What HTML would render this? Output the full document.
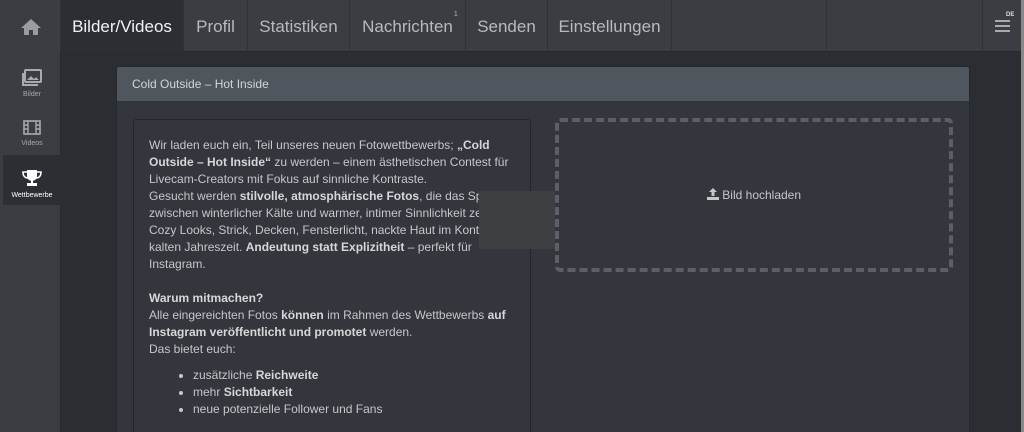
<!DOCTYPE html>
<html><head><meta charset="utf-8"><style>
*{margin:0;padding:0;box-sizing:border-box}
html,body{width:1024px;height:432px;overflow:hidden}
body{background:#2a2d32;font-family:"Liberation Sans",Arial,sans-serif;position:relative;color:#c9cacc}
.top{position:absolute;left:0;top:0;width:1024px;height:52px;background:#3a3d42;border-bottom:1px solid #25282c}
.top div.t{position:absolute;top:0;height:52px;line-height:54px;font-size:17px;color:#b8babd;text-align:center;border-right:1px solid #2e3135}
.side{position:absolute;left:0;top:52px;width:61px;height:380px;background:#3a3d42;border-right:1px solid #25282c}
.si{position:absolute;left:3px;width:58px;height:50px;text-align:center;font-size:7px;color:#a8aaad}
.si div{margin-top:3px}
.panel{position:absolute;left:116px;top:66px;width:854px;height:366px;background:#33363c;border:1px solid #25282c;border-bottom:none;border-radius:3px 3px 0 0;overflow:hidden}
.ph{height:34px;background:#50565e;color:#d4d6d8;font-size:12px;line-height:34px;padding-left:15px}
.txt{position:absolute;left:16px;top:52px;width:398px;height:330px;border:1px solid #232529;border-radius:3px;padding:17px 4px 17px 15px;font-size:12px;line-height:17px;color:#c6c7c9}
b{color:#d6d7d9}
ul{margin-top:9px;padding-left:44px}
.dash{position:absolute;left:438px;top:51px;width:398px;height:154px;border:4px dashed #5c6066;border-radius:5px;text-align:center;line-height:146px;font-size:12px;color:#c6c7c9}
</style></head><body>
<div class="top">
<div class="t" style="left:0;width:61px;background:#3a3d42"><svg width="20" height="17" viewBox="0 0 20 17" style="margin-top:18px;display:block;margin-left:21px"><path d="M10 1L0 10h3v7h5v-5h4v5h5v-7h3z" fill="#9a9ca0"/></svg></div>
<div class="t" style="left:61px;width:123px;background:#2b2e33;color:#f2f2f2">Bilder/Videos</div>
<div class="t" style="left:184px;width:64px">Profil</div>
<div class="t" style="left:248px;width:102px">Statistiken</div>
<div class="t" style="left:350px;width:116px">Nachrichten<span style="font-size:7px;position:absolute;top:-12px;margin-left:1px">1</span></div>
<div class="t" style="left:466px;width:82px">Senden</div>
<div class="t" style="left:548px;width:124px">Einstellungen</div>
<div class="t" style="left:672px;width:155px"></div>
<div class="t" style="left:827px;width:156px"></div>
<div style="position:absolute;left:995px;top:20px;width:15px;height:2px;background:#aaa;box-shadow:0 5px #aaa,0 10px #aaa"></div>
<div style="position:absolute;left:1006px;top:12px;font-size:6px;font-weight:bold;color:#ddd">DE</div>
<div style="position:absolute;left:1021px;top:0;width:3px;height:432px;background:#888"></div>
</div>
<div class="side">
<div class="si" style="top:5px"><svg width="20" height="17" style="margin-top:12px"><rect x="3" y="1" width="16" height="12" rx="1" fill="none" stroke="#a8aaad" stroke-width="2"/><path d="M1 4v12h15" fill="none" stroke="#a8aaad" stroke-width="2"/><path d="M5 11l4-4 3 3 2-2 3 3z" fill="#a8aaad"/></svg><div>Bilder</div></div>
<div class="si" style="top:55px"><svg width="18" height="15" style="margin-top:13px"><rect x="1" y="1" width="16" height="13" fill="none" stroke="#a8aaad" stroke-width="1.6"/><path d="M5 1v13M13 1v13M1 5h4M1 9h4M13 5h4M13 9h4" stroke="#a8aaad" stroke-width="1.4"/></svg><div>Videos</div></div>
<div class="si" style="top:103px;background:#2b2e33;color:#fff"><svg width="20" height="18" style="margin-top:14px"><path d="M5 1h10v6a5 5 0 0 1-10 0z" fill="#fff"/><path d="M5 3H1c0 4 2 6 5 6M15 3h4c0 4-2 6-5 6" fill="none" stroke="#fff" stroke-width="1.6"/><rect x="9" y="11" width="2" height="3" fill="#fff"/><rect x="5" y="14" width="10" height="3" fill="#fff"/></svg><div>Wettbewerbe</div></div>
</div>
<div class="panel">
<div class="ph">Cold Outside – Hot Inside</div>
<div class="txt">Wir laden euch ein, Teil unseres neuen Fotowettbewerbs; <b>„Cold Outside – Hot Inside“</b> zu werden – einem ästhetischen Contest für Livecam-Creators mit Fokus auf sinnliche Kontraste.<br>Gesucht werden <b>stilvolle, atmosphärische Fotos</b>, die das Spiel zwischen winterlicher Kälte und warmer, intimer Sinnlichkeit zeigen. Cozy Looks, Strick, Decken, Fensterlicht, nackte Haut im Kontrast zur kalten Jahreszeit. <b>Andeutung statt Explizitheit</b> – perfekt für Instagram.<br><br><b>Warum mitmachen?</b><br>Alle eingereichten Fotos <b>können</b> im Rahmen des Wettbewerbs <b>auf Instagram veröffentlicht und promotet</b> werden.<br>Das bietet euch:
<ul><li>zusätzliche <b>Reichweite</b></li><li>mehr <b>Sichtbarkeit</b></li><li>neue potenzielle Follower und Fans</li></ul></div>
<div class="dash"><svg width="12" height="12" viewBox="0 0 12 12" style="vertical-align:-1px"><path d="M6 0L2 4h2.5v4h3V4H10z" fill="#c6c7c9"/><path d="M0 9h12v3H0z" fill="#c6c7c9"/></svg> Bild hochladen</div>
<div style="position:absolute;left:362px;top:124px;width:76px;height:58px;background:#3d4043"></div>
</div>
</body></html>
